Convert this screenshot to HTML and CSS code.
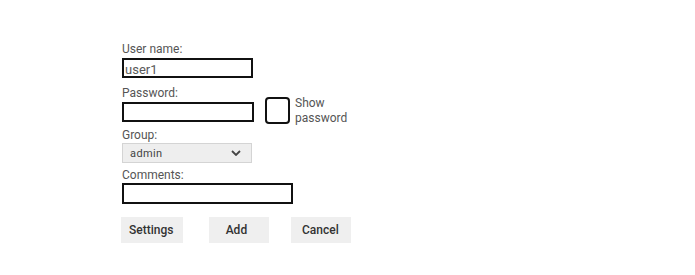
FILE: index.html
```html
<!DOCTYPE html>
<html>
<head>
<meta charset="utf-8">
<link rel="stylesheet" href="styles.css">
</head>
<body>
<form class="form">
  <div class="field">
    <label class="label" for="user">User name:</label>
    <input class="text-input w-user" id="user" type="text" value="user1">
  </div>
  <div class="row-password">
    <div class="field">
      <label class="label" for="pass">Password:</label>
      <input class="text-input w-pass" id="pass" type="password">
    </div>
    <div class="check-group">
      <input class="check" id="show" type="checkbox">
      <label class="check-label" for="show">Show<br>password</label>
    </div>
  </div>
  <div class="field field-tight row-group">
    <span class="label">Group:</span>
    <div class="select">
      <span class="select-value">admin</span>
      <svg class="chevron" width="10" height="6" viewBox="0 0 10 6"><polyline points="1,1 5,5 9,1" fill="none" stroke="#444" stroke-width="1.8"/></svg>
    </div>
  </div>
  <div class="field field-tight row-comments">
    <label class="label" for="comments">Comments:</label>
    <input class="text-input w-comments" id="comments" type="text">
  </div>
  <div class="buttons">
    <button type="button" class="btn btn-settings">Settings</button>
    <button type="button" class="btn btn-add">Add</button>
    <button type="button" class="btn">Cancel</button>
  </div>
</form>
</body>
</html>
```
FILE: styles.css
```css
html, body {
  margin: 0;
  padding: 0;
  background: #ffffff;
}

body {
  width: 695px;
  height: 275px;
  font-family: Roboto, "Liberation Sans", sans-serif;
}

.form {
  display: flex;
  flex-direction: column;
  align-items: flex-start;
  padding: 42px 0 0 122px;
  margin: 0;
}

.field {
  display: flex;
  flex-direction: column;
  align-items: flex-start;
  gap: 2px;
}

.field-tight {
  gap: 1px;
}

.label {
  display: block;
  height: 14px;
  font-size: 12px;
  line-height: 14px;
  color: #555555;
}

.text-input {
  box-sizing: border-box;
  height: 20px;
  margin: 0;
  border: 2px solid #111111;
  border-radius: 0;
  padding: 3px 0 0 1px;
  font-family: Roboto, "Liberation Sans", sans-serif;
  font-size: 13px;
  color: #5a5a5a;
  background: #ffffff;
  outline: none;
}

.w-user { width: 131px; }
.w-pass { width: 132px; }
.w-comments { width: 171px; height: 21px; }

.row-password {
  display: flex;
  align-items: flex-start;
  margin-top: 8px;
}

.check-group {
  display: flex;
  align-items: center;
  height: 27px;
  margin: 11px 0 0 11px;
}

.check {
  appearance: none;
  -webkit-appearance: none;
  box-sizing: border-box;
  width: 25px;
  height: 27px;
  margin: 0;
  border: 2px solid #111111;
  border-radius: 4px;
  background: #ffffff;
}

.check-label {
  display: block;
  margin-left: 5px;
  font-size: 12px;
  line-height: 14.2px;
  color: #555555;
}

.row-group {
  margin-top: 4px;
}

.select {
  box-sizing: border-box;
  width: 130px;
  height: 20px;
  display: flex;
  align-items: center;
  justify-content: space-between;
  padding: 0 10px 0 7px;
  border: 1px solid #d4d4d4;
  background: #eeeeee;
}

.select-value {
  font-size: 11px;
  letter-spacing: 0.4px;
  color: #444444;
}

.chevron {
  display: block;
}

.row-comments {
  margin-top: 5px;
}

.buttons {
  display: flex;
  margin: 13px 0 0 -1px;
}

.btn {
  box-sizing: border-box;
  height: 26px;
  min-width: 60px;
  padding: 0 10px 0 8px;
  margin: 0 22px 0 0;
  border: none;
  border-radius: 0;
  background: #efefef;
  font-family: Roboto, "Liberation Sans", sans-serif;
  font-size: 12px;
  font-weight: 500;
  color: #333333;
}

.btn-settings {
  margin-right: 26px;
}

.btn-add {
  padding-right: 14px;
}
```
